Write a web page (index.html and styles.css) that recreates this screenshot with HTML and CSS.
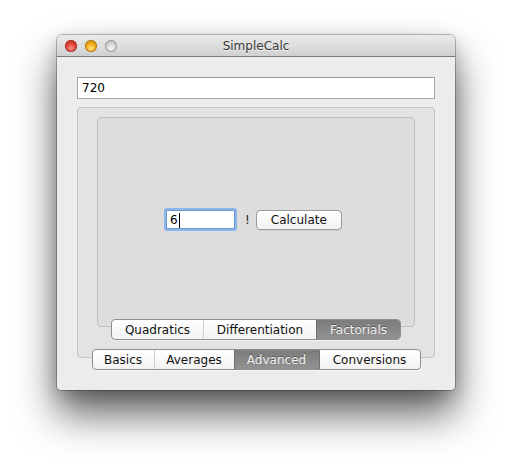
FILE: index.html
```html
<!DOCTYPE html>
<html>
<head>
<meta charset="utf-8">
<title>SimpleCalc</title>
<link rel="stylesheet" href="styles.css">
</head>
<body>
<div class="window">
  <div class="titlebar">
    <div class="lights">
      <span class="light red"></span>
      <span class="light orange"></span>
      <span class="light gray"></span>
    </div>
    <div class="title">SimpleCalc</div>
    <div></div>
  </div>
  <div class="content">
    <div class="result">720</div>
    <div class="tabview outer">
      <div class="box outer-box">
        <div class="tabview inner">
          <div class="box inner-box">
            <div class="calc-row">
              <div class="num-input">6<span class="caret"></span></div>
              <span class="bang">!</span>
              <div class="button">Calculate</div>
            </div>
          </div>
          <div class="segmented inner-tabs">
            <div class="seg w-quad">Quadratics</div>
            <div class="seg w-diff">Differentiation</div>
            <div class="seg w-fact selected">Factorials</div>
          </div>
        </div>
      </div>
      <div class="segmented outer-tabs">
        <div class="seg w-basics">Basics</div>
        <div class="seg w-avg">Averages</div>
        <div class="seg w-adv selected">Advanced</div>
        <div class="seg w-conv">Conversions</div>
      </div>
    </div>
  </div>
</div>
</body>
</html>
```
FILE: styles.css
```css
* { box-sizing: border-box; }
html, body { margin: 0; }
body {
  background: #ffffff;
  padding: 35px 0 0 57px;
  min-height: 469px;
  font-family: "DejaVu Sans", "Liberation Sans", sans-serif;
  font-size: 12px;
  color: #1a1a1a;
}
.window {
  width: 398px;
  background: #ececec;
  border-radius: 5px 5px 4px 4px;
  box-shadow: 0 0 0 1px rgba(0,0,0,0.25), 0 24px 40px rgba(0,0,0,0.62), 0 6px 18px rgba(0,0,0,0.2);
  overflow: hidden;
}
.titlebar {
  height: 22px;
  display: grid;
  grid-template-columns: 1fr auto 1fr;
  align-items: center;
  background: linear-gradient(#ebebeb, #d0d0d0);
  border-bottom: 1px solid #7c7c7c;
}
.lights {
  display: flex;
  gap: 8px;
  padding-left: 8px;
}
.light {
  width: 12px;
  height: 12px;
  border-radius: 50%;
  display: block;
}
.red {
  background: radial-gradient(circle at 50% 70%, #ff8f84 0%, #e2463b 45%, #b8261c 100%);
  box-shadow: inset 0 0 0 1px #a7352c;
}
.orange {
  background: radial-gradient(circle at 50% 70%, #ffe27e 0%, #f3ad1d 45%, #c0830d 100%);
  box-shadow: inset 0 0 0 1px #b27c1a;
}
.gray {
  background: radial-gradient(circle at 50% 70%, #f6f6f6 0%, #d2d2d2 50%, #a9a9a9 100%);
  box-shadow: inset 0 0 0 1px #9e9e9e;
}
.title {
  color: #3a3a3a;
  font-size: 12px;
  text-shadow: 0 1px 0 rgba(255,255,255,0.6);
}
.content {
  padding: 20px 20px 20px;
}
.result {
  height: 22px;
  background: #ffffff;
  border: 1px solid #a6a6a6;
  border-top-color: #979797;
  padding: 2px 4px 0;
  line-height: 17px;
  color: #000;
}
.tabview {
  display: flex;
  flex-direction: column;
  align-items: center;
}
.tabview.outer { margin-top: 8px; }
.box {
  align-self: stretch;
  border-radius: 4px;
}
.outer-box {
  height: 251px;
  background: #e3e3e3;
  border: 1px solid #c4c4c4;
  padding: 9px 19px 0;
}
.inner-box {
  height: 210px;
  background: #dddddd;
  border: 1px solid #bfbfbf;
  display: flex;
  align-items: center;
  padding: 0 0 5px 68px;
}
.calc-row {
  display: flex;
  align-items: center;
}
.num-input {
  width: 69px;
  height: 19px;
  background: #fff;
  border: 1px solid #6e95c9;
  box-shadow: 0 0 0 2px #8db6ea;
  border-radius: 1px;
  padding: 1px 0 0 3px;
  line-height: 16px;
  color: #000;
  display: flex;
  align-items: center;
}
.caret {
  display: block;
  width: 1px;
  height: 15px;
  background: #000;
  margin-left: 1px;
}
.bang {
  margin-left: 10px;
  color: #1a1a1a;
}
.button {
  margin-left: 6px;
  width: 86px;
  height: 20px;
  border: 1px solid #9b9b9b;
  border-radius: 4px;
  background: linear-gradient(#ffffff, #f1f1f1);
  box-shadow: 0 1px 0 rgba(0,0,0,0.06);
  display: flex;
  align-items: center;
  justify-content: center;
  color: #111;
}
.segmented {
  position: relative;
  display: flex;
  height: 21px;
  border: 1px solid #8f8f8f;
  border-radius: 4px;
  overflow: hidden;
  background: linear-gradient(#ffffff, #f2f2f2);
  box-shadow: 0 1px 0 rgba(255,255,255,0.5);
}
.inner-tabs { margin-top: -8px; }
.outer-tabs { margin-top: -9px; }
.seg {
  display: flex;
  align-items: center;
  justify-content: center;
  color: #111;
  border-left: 1px solid #cfcfcf;
}
.seg:first-child { border-left: none; }
.seg.selected {
  background: linear-gradient(#7c7c7c, #929292);
  color: #f2f2f2;
  text-shadow: 0 -1px 0 rgba(0,0,0,0.35);
  border-left-color: #6f6f6f;
}
.seg.selected + .seg { border-left-color: #6f6f6f; }
.w-quad { width: 91px; }
.w-diff { width: 113px; }
.w-fact { width: 84px; }
.w-basics { width: 61px; }
.w-avg { width: 80px; }
.w-adv { width: 85px; }
.w-conv { width: 101px; }
```
